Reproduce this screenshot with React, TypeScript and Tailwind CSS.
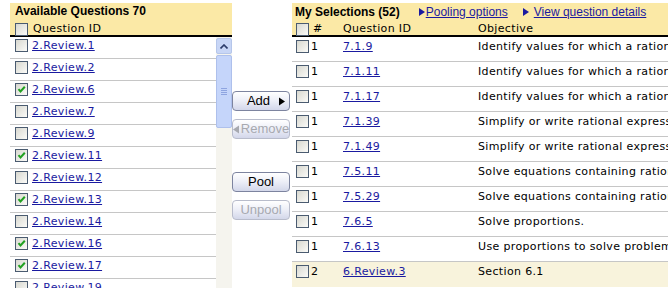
import React from 'react';

const VERDANA = "font-['DejaVu_Sans',Verdana,sans-serif] tracking-[0.35px]";
const ARIAL = "font-['Liberation_Sans',Arial,sans-serif]";

const AVAILABLE: { id: string; checked: boolean }[] = [
  { id: '2.Review.1', checked: false },
  { id: '2.Review.2', checked: false },
  { id: '2.Review.6', checked: true },
  { id: '2.Review.7', checked: false },
  { id: '2.Review.9', checked: false },
  { id: '2.Review.11', checked: true },
  { id: '2.Review.12', checked: false },
  { id: '2.Review.13', checked: true },
  { id: '2.Review.14', checked: false },
  { id: '2.Review.16', checked: true },
  { id: '2.Review.17', checked: true },
  { id: '2.Review.19', checked: false },
];

const SELECTIONS = [
  { n: 1, id: '7.1.9', obj: 'Identify values for which a rational expression is undefined.' },
  { n: 1, id: '7.1.11', obj: 'Identify values for which a rational expression is undefined.' },
  { n: 1, id: '7.1.17', obj: 'Identify values for which a rational expression is undefined.' },
  { n: 1, id: '7.1.39', obj: 'Simplify or write rational expressions in lowest terms.' },
  { n: 1, id: '7.1.49', obj: 'Simplify or write rational expressions in lowest terms.' },
  { n: 1, id: '7.5.11', obj: 'Solve equations containing rational expressions.' },
  { n: 1, id: '7.5.29', obj: 'Solve equations containing rational expressions.' },
  { n: 1, id: '7.6.5', obj: 'Solve proportions.' },
  { n: 1, id: '7.6.13', obj: 'Use proportions to solve problems.' },
  { n: 2, id: '6.Review.3', obj: 'Section 6.1', pooled: true },
];

function Check({ checked = false }: { checked?: boolean }) {
  return (
    <span className="relative inline-block w-[13px] h-[13px] shrink-0 border border-[#4a5b70] bg-gradient-to-br from-[#d8d8d0] to-[#fbfbf8]">
      {checked && (
        <svg viewBox="0 0 11 11" className="absolute left-0 top-0 w-[11px] h-[11px]">
          <path d="M2.5 5.2 L4.5 7.5 L8.8 2.8" fill="none" stroke="#21a121" strokeWidth="2" />
        </svg>
      )}
    </span>
  );
}

function Tri({ dir = 'right', className = '' }: { dir?: 'right' | 'left'; className?: string }) {
  return (
    <svg viewBox="0 0 6 8" className={`shrink-0 ${className}`}>
      {dir === 'right' ? <path d="M0 0 L6 4 L0 8 Z" fill="currentColor" /> : <path d="M6 0 L0 4 L6 8 Z" fill="currentColor" />}
    </svg>
  );
}

function Btn({ children, disabled = false }: { children: React.ReactNode; disabled?: boolean }) {
  return (
    <div
      className={`flex items-center justify-center h-[20px] w-[58px] rounded-[4px] border bg-gradient-to-b from-[#ffffff] via-[#eceef7] to-[#d3d7ea] text-[13px] ${ARIAL} ${
        disabled ? 'border-[#b8bccb] text-[#a7a9b0]' : 'border-[#7d849f] text-black'
      }`}
    >
      {children}
    </div>
  );
}

export default function App() {
  return (
    <div className="w-[668px] h-[288px] overflow-hidden bg-white flex pt-[3px]">
      {/* Available questions */}
      <div className="ml-[10px] w-[222px] shrink-0 flex flex-col">
        <div className="h-[34px] bg-[#fbe9a6] pl-[5px] border-b-2 border-black">
          <div className={`text-[12px] font-bold leading-[15px] pt-[1px] ${ARIAL}`}>Available Questions 70</div>
          <div className={`flex items-center gap-[5px] mt-[2px] text-[11px] ${VERDANA}`}>
            <Check />
            <span>Question ID</span>
          </div>
        </div>
        <div className="flex flex-1 min-h-0">
          <div className="w-[206px] overflow-hidden">
            {AVAILABLE.map((q) => (
              <div key={q.id} className="h-[22px] border-b border-[#c6c6c6] flex items-start pt-[2px] pl-[5px] gap-[4px]">
                <Check checked={q.checked} />
                <span className={`text-[11px] leading-[13px] text-[#1a1aa0] underline ${VERDANA}`}>{q.id}</span>
              </div>
            ))}
          </div>
          <div className="w-[16px] bg-[#f5f4ee] flex flex-col pt-[1px]">
            <div className="h-[16px] rounded-[2px] border border-[#b5c6ea] bg-[#c8d6f6] flex items-center justify-center">
              <svg viewBox="0 0 8 5" className="w-[8px] h-[5px]">
                <path d="M0.5 4.5 L4 1 L7.5 4.5" fill="none" stroke="#2c3c6a" strokeWidth="1.6" />
              </svg>
            </div>
            <div className="mt-[1px] h-[73px] rounded-[2px] border border-[#aec0ec] bg-[#c5d5fa] flex flex-col items-center justify-center gap-[1px]">
              <div className="w-[6px] h-px bg-[#8ea4e0]" />
              <div className="w-[6px] h-px bg-[#8ea4e0]" />
              <div className="w-[6px] h-px bg-[#8ea4e0]" />
              <div className="w-[6px] h-px bg-[#8ea4e0]" />
            </div>
          </div>
        </div>
      </div>

      {/* Buttons */}
      <div className="w-[60px] shrink-0 flex flex-col items-start pt-[88px]">
        <Btn>
          <span className="ml-[10px]">Add</span>
          <Tri className="w-[6px] h-[9px] ml-[9px] text-black" />
        </Btn>
        <div className="mt-[8px]">
          <Btn disabled>
            <Tri dir="left" className="w-[6px] h-[9px] mr-[2px] text-[#a7a9b0]" />
            <span>Remove</span>
          </Btn>
        </div>
        <div className="mt-[33px]">
          <Btn>Pool</Btn>
        </div>
        <div className="mt-[8px]">
          <Btn disabled>Unpool</Btn>
        </div>
      </div>

      {/* My selections */}
      <div className="flex-1 min-w-0 flex flex-col overflow-hidden">
        <div className="h-[34px] shrink-0 bg-[#fbe9a6] border-b-2 border-black">
          <div className="flex items-center h-[16px] pt-[1px]">
            <span className={`pl-[3px] shrink-0 text-[12px] font-bold ${ARIAL}`}>My Selections (52)</span>
            <span className={`ml-[19px] shrink-0 flex items-center text-[12px] text-[#1a1aa0] ${ARIAL}`}>
              <Tri className="w-[6px] h-[8px] mr-[1px]" />
              <span className="underline">Pooling options</span>
            </span>
            <span className={`ml-[15px] shrink-0 flex items-center text-[12px] text-[#1a1aa0] ${ARIAL}`}>
              <Tri className="w-[6px] h-[8px] mr-[5px]" />
              <span className="underline whitespace-nowrap">View question details</span>
            </span>
          </div>
          <div className={`flex items-center mt-[2px] pl-[4px] text-[11px] ${VERDANA}`}>
            <Check />
            <span className="ml-[4px] w-[30px] shrink-0">#</span>
            <span className="w-[135px] shrink-0">Question ID</span>
            <span className="shrink-0">Objective</span>
          </div>
        </div>
        {SELECTIONS.map((s) => (
          <div
            key={s.id}
            className={`h-[25px] shrink-0 flex items-start pt-[3px] pl-[4px] text-[11px] leading-[13px] ${VERDANA} ${
              s.pooled ? 'bg-[#f8f3dc]' : 'border-b border-[#c6c6c6]'
            }`}
          >
            <Check />
            <span className="ml-[2px] w-[32px] shrink-0">{s.n}</span>
            <span className="w-[135px] shrink-0 text-[#1a1aa0] underline">{s.id}</span>
            <span className="whitespace-nowrap shrink-0">{s.obj}</span>
          </div>
        ))}
      </div>
    </div>
  );
}
